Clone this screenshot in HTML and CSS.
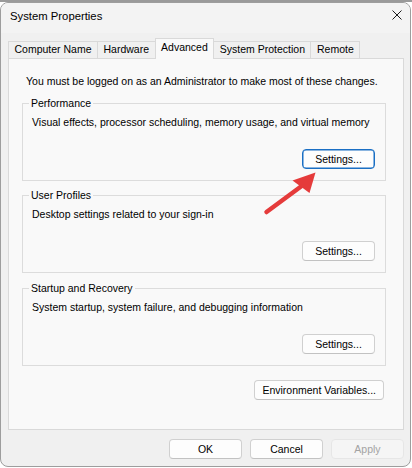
FILE: index.html
```html
<!DOCTYPE html>
<html lang="en">
<head>
<meta charset="utf-8">
<title>System Properties</title>
<link rel="stylesheet" href="styles.css">
</head>
<body>
  <div class="window">
    <div class="titlebar">
      <span class="title">System Properties</span>
      <span class="close" aria-label="Close">
        <svg width="10" height="10" viewBox="0 0 10 10"><path d="M0.5 0.5 L9.5 9.5 M9.5 0.5 L0.5 9.5" stroke="#1b1b1b" stroke-width="1" fill="none"/></svg>
      </span>
    </div>
    <div class="body">
      <div class="tabs">
        <div class="tab">Computer Name</div>
        <div class="tab">Hardware</div>
        <div class="tab active">Advanced</div>
        <div class="tab">System Protection</div>
        <div class="tab">Remote</div>
      </div>
      <div class="panel">
        <p class="note">You must be logged on as an Administrator to make most of these changes.</p>
        <fieldset class="group">
          <legend>Performance</legend>
          <p class="desc">Visual effects, processor scheduling, memory usage, and virtual memory</p>
          <div class="actions"><button class="btn focused">Settings...</button></div>
        </fieldset>
        <fieldset class="group">
          <legend>User Profiles</legend>
          <p class="desc">Desktop settings related to your sign-in</p>
          <div class="actions"><button class="btn">Settings...</button></div>
        </fieldset>
        <fieldset class="group last">
          <legend>Startup and Recovery</legend>
          <p class="desc">System startup, system failure, and debugging information</p>
          <div class="actions"><button class="btn">Settings...</button></div>
        </fieldset>
        <div class="env"><button class="btn">Environment Variables...</button></div>
      </div>
      <div class="footer">
        <button class="btn">OK</button>
        <button class="btn">Cancel</button>
        <button class="btn" disabled>Apply</button>
      </div>
    </div>
  </div>
  <svg class="pointer" width="412" height="468" viewBox="0 0 412 468">
    <line x1="266.5" y1="212" x2="301" y2="186.5" stroke="#e53b3b" stroke-width="4.5" stroke-linecap="round"/>
    <polygon points="315.5,172.5 292.5,180.5 309.5,193" fill="#e53b3b"/>
  </svg>
</body>
</html>
```

FILE: styles.css
```css
html, body {
  margin: 0;
  padding: 0;
}

body {
  width: 412px;
  height: 468px;
  overflow: hidden;
  padding-top: 2px;
  box-sizing: border-box;
  background: linear-gradient(#9a9a9a 0 2px, #ffffff 2px);
  font-family: "Liberation Sans", Arial, sans-serif;
  font-size: 10.5px;
  color: #000;
}

.window {
  width: 411px;
  height: 465px;
  box-sizing: border-box;
  border: 1px solid #9d9d9d;
  border-radius: 8px;
  background: #f0f0f0;
  overflow: hidden;
  display: flex;
  flex-direction: column;
}

.titlebar {
  height: 30px;
  flex: none;
  display: flex;
  align-items: center;
  justify-content: space-between;
  padding: 0 8px 4px 9px;
  box-sizing: border-box;
  background: #f3f3f3;
}

.title {
  font-size: 11.3px;
  line-height: 14px;
}

.close {
  display: flex;
  width: 10px;
  height: 10px;
  margin-top: -2px;
}

.body {
  flex: 1;
  padding: 5px 6px 0 7px;
  display: flex;
  flex-direction: column;
}

/* tab strip */
.tabs {
  display: flex;
  align-items: flex-end;
  height: 20px;
}

.tab {
  height: 17px;
  box-sizing: border-box;
  padding: 0 5.5px;
  border: 1px solid #d9d9d9;
  border-bottom: none;
  margin-right: -1px;
  line-height: 15px;
  background: #f0f0f0;
  white-space: nowrap;
}

.tab.active {
  position: relative;
  z-index: 1;
  height: 21px;
  margin-bottom: -1px;
  padding-top: 1px;
  background: #f9f9f9;
}

/* tab page */
.panel {
  width: 396px;
  height: 372px;
  box-sizing: border-box;
  border: 1px solid #d9d9d9;
  background: #f9f9f9;
  padding: 0 17px 0 13px;
  flex: none;
}

.note {
  margin: 14px 0 0 4px;
  line-height: 16px;
}

.group {
  margin: 7px 0 0;
  padding: 4px 10px 11px 6px;
  border: 1px solid #dcdcdc;
  min-width: 0;
}

.group.last {
  margin-top: 8px;
}

.group legend {
  padding: 0 2px;
  line-height: 14px;
}

.desc {
  margin: 0 0 0 3px;
  line-height: 16px;
}

.actions {
  display: flex;
  justify-content: flex-end;
  margin-top: 19px;
}

.env {
  display: flex;
  justify-content: flex-end;
  margin: 14px 2px 0 0;
}

/* push buttons */
.btn {
  height: 20px;
  min-width: 73px;
  box-sizing: border-box;
  padding: 0 7px;
  border: 1px solid #d0d0d0;
  border-bottom-color: #c2c2c2;
  border-radius: 4px;
  background: #fdfdfd;
  font: inherit;
  line-height: 16px;
  color: #000;
  white-space: nowrap;
}

.btn.focused {
  border-color: #1a6fc4;
  box-shadow: inset 0 0 0 0.5px #1a6fc4;
}

.btn:disabled {
  background: #f5f5f5;
  border-color: #e6e6e6;
  color: #a3a3a3;
}

.footer {
  display: flex;
  justify-content: flex-end;
  gap: 8px;
  padding: 9px 0 0;
}

.pointer {
  position: absolute;
  left: 0;
  top: 0;
  pointer-events: none;
}
```
